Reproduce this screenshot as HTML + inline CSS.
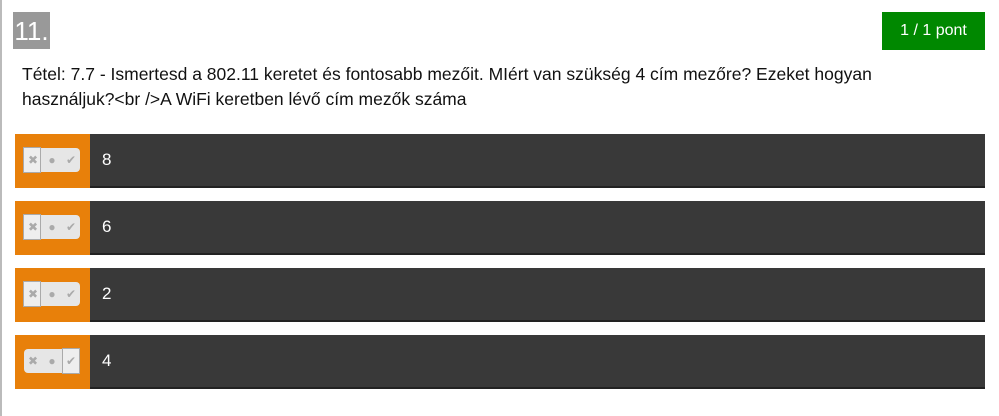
<!DOCTYPE html><html><head><style>
body{margin:0;width:999px;height:416px;background:#fff;font-family:"Liberation Sans",sans-serif;position:relative;overflow:hidden}
.lb{position:absolute;left:0;top:0;width:2px;height:416px;background:#bbb}
.num{position:absolute;left:13px;top:12px;width:37px;height:37px;background:#999;color:#fff;font-size:26px;line-height:38px;text-align:center}
.badge{position:absolute;left:882px;top:12px;width:103px;height:38px;background:#080;color:#fff;font-size:16px;line-height:38px;text-align:center}
.q{position:absolute;left:22px;top:62px;width:945px;font-size:17.5px;line-height:25px;color:#111}
.row{position:absolute;left:15px;width:970px;height:54px;background:#393939;border-bottom:2px solid #222;box-sizing:border-box}
.or{position:absolute;left:0;top:0;width:75px;height:54px;background:#e8800a}
.tg{position:absolute;left:9px;top:14px;width:56px;height:24px;background:#e6e6e6;border-radius:4px;color:#aaa;font-size:12px;line-height:24px}
.tg span{position:absolute;width:18px;text-align:center}
.sel{position:absolute;top:-1px;width:16px;height:24px;border:1px solid #aaa;background:#eee}
.lab{position:absolute;left:87px;top:0;line-height:52px;color:#fff;font-size:17px}
</style></head><body>
<div class="lb"></div>
<div class="num">11.</div>
<div class="badge">1 / 1 pont</div>
<div class="q">Tétel: 7.7 - Ismertesd a 802.11 keretet és fontosabb mezőit. MIért van szükség 4 cím mezőre? Ezeket hogyan használjuk?&lt;br /&gt;A WiFi keretben lévő cím mezők száma</div>
<div class="row" style="top:134px"><div class="or"><div class="tg"><div class="sel" style="left:-1px"></div><span style="left:0">✖</span><span style="left:19px">●</span><span style="left:38px">✔</span></div></div><div class="lab">8</div></div>
<div class="row" style="top:201px"><div class="or"><div class="tg"><div class="sel" style="left:-1px"></div><span style="left:0">✖</span><span style="left:19px">●</span><span style="left:38px">✔</span></div></div><div class="lab">6</div></div>
<div class="row" style="top:268px"><div class="or"><div class="tg"><div class="sel" style="left:-1px"></div><span style="left:0">✖</span><span style="left:19px">●</span><span style="left:38px">✔</span></div></div><div class="lab">2</div></div>
<div class="row" style="top:335px"><div class="or"><div class="tg"><div class="sel" style="left:38px"></div><span style="left:0">✖</span><span style="left:19px">●</span><span style="left:38px">✔</span></div></div><div class="lab">4</div></div>
</body></html>
